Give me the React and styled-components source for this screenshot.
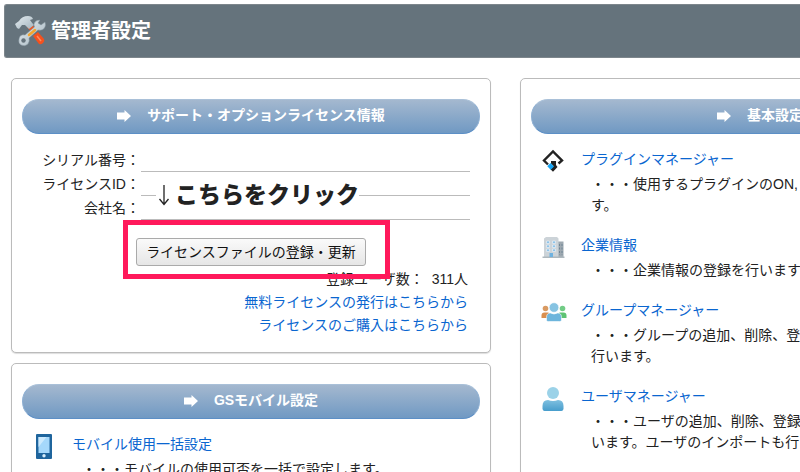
import React from 'react';
import styled, {createGlobalStyle} from 'styled-components';

const App = () => {
  return (
    <StyledPage>
      <GlobalStyle />
      <StyledHeader>
        <ToolsIcon />
        <h1>管理者設定</h1>
      </StyledHeader>
      <StyledColumns>
        <StyledColumn>
          <StyledCard>
            <SectionTitle>サポート・オプションライセンス情報</SectionTitle>
            <StyledLicense>
              <tbody>
                <tr>
                  <th scope='row'>シリアル番号：</th>
                  <td></td>
                </tr>
                <tr>
                  <th scope='row'>ライセンスID：</th>
                  <td>
                    <StyledCallout>
                      <ArrowDown />
                      こちらをクリック
                    </StyledCallout>
                  </td>
                </tr>
                <tr>
                  <th scope='row'>会社名：</th>
                  <td></td>
                </tr>
              </tbody>
            </StyledLicense>
            <StyledAction>
              <StyledHighlight>
                <StyledButton type='button'>
                  ライセンスファイルの登録・更新
                </StyledButton>
              </StyledHighlight>
            </StyledAction>
            <StyledSummary>
              <StyledCount>
                <dt>登録ユーザ数：</dt>
                <dd>311人</dd>
              </StyledCount>
              <StyledLink href='#free'>無料ライセンスの発行はこちらから</StyledLink>
              <StyledLink href='#buy'>ライセンスのご購入はこちらから</StyledLink>
            </StyledSummary>
          </StyledCard>
          <StyledCard>
            <SectionTitle>GSモバイル設定</SectionTitle>
            <MenuList items={mobileItems} />
          </StyledCard>
        </StyledColumn>
        <StyledCard>
          <SectionTitle>基本設定</SectionTitle>
          <MenuList items={basicItems} />
        </StyledCard>
      </StyledColumns>
    </StyledPage>
  );
};

const SectionTitle = ({children}) => (
  <StyledSectionTitle>
    <svg width='14' height='12' viewBox='0 0 14 12'>
      <path d='M0 2.500h7.500V0L14 6l-6.500 6V9.500H0z' fill='#fff' />
    </svg>
    {children}
  </StyledSectionTitle>
);

const MenuList = ({items}) => (
  <StyledMenu>
    {items.map(({id, title, lines, Icon}) => (
      <StyledMenuItem key={id}>
        <Icon />
        <div>
          <StyledLink href={`#${id}`}>{title}</StyledLink>
          <StyledDescription>
            {lines.map((line) => (
              <span key={line}>{line}</span>
            ))}
          </StyledDescription>
        </div>
      </StyledMenuItem>
    ))}
  </StyledMenu>
);

//icons
const ToolsIcon = () => (
  <svg width='32' height='32' viewBox='0 0 32 32'>
    <defs>
      <linearGradient id='steel' x1='0' y1='0' x2='1' y2='1'>
        <stop offset='0' stopColor='#e6edf1' />
        <stop offset='1' stopColor='#a3b4be' />
      </linearGradient>
    </defs>
    <path d='M12 12l4-3 6 6-4 4z' fill='#e8582a' />
    <path d='M18 21l5-4 6 7q1 2-1 4t-4 1z' fill='#f4511e' />
    <path d='M22 21l4 5' stroke='#ff8a5c' strokeWidth='1.500' />
    <path
      d='M0 9l4-3q3-5 9-5 4 0 5 3l-3 1q2 3 4 5l-5 4-4-4-3 0-3 4-2-1-1-2z'
      fill='url(#steel)'
    />
    <path
      d='M25 5q-5 0-6 4 0 2 .5 3L10 20q-5-1-6 4-1 4 2 6 4 2 7-1 2-3 1-6l9-8q5 1 7-3 1-2 0-5l-4 3-3-2z'
      fill='url(#steel)'
      stroke='#82939d'
      strokeWidth='.5'
    />
    <path d='M14 20l6-5' stroke='#f5a52b' strokeWidth='2.500' strokeLinecap='round' />
    <circle cx='8.500' cy='25.500' r='2.200' fill='#65737c' />
  </svg>
);

const ArrowDown = () => (
  <svg width='12' height='22' viewBox='0 0 12 22'>
    <path d='M6 1v19M1.500 15L6 20.500 10.500 15' fill='none' stroke='#222' strokeWidth='1.300' />
  </svg>
);

const PluginIcon = () => (
  <svg width='24' height='24' viewBox='0 0 24 24'>
    <path
      d='M7 15.500L3 11.500l9-9 9 9-3.500 3'
      fill='none'
      stroke='#222'
      strokeWidth='2.400'
    />
    <path d='M10 12h5v4l1.500 2-4.500 4.800-2.500-2.600 3-3.200-2.500-2.500z' fill='#222' />
    <path d='M9.500 14l3.500 3.500-3.300 3.200L6.300 17.300z' fill='#16a5f5' />
  </svg>
);

const BuildingIcon = () => (
  <svg width='24' height='24' viewBox='0 0 24 24'>
    <path d='M16 6.500h6.500V22H16z' fill='#9da8b0' />
    <path d='M3 3.500L5 2h11l1.500 1.500V22H3z' fill='#ccd3d8' />
    <path d='M1.500 21.500h22v1.500h-22z' fill='#aeb8be' />
    <path
      d='M5.500 6h3v2.500h-3zM11.500 6h3v2.500h-3zM5.500 10h3v2.500h-3zM11.500 10h3v2.500h-3zM5.500 14h3v2.500h-3zM11.500 14h3v2.500h-3z'
      fill='#8dc3e8'
      stroke='#f3f7fa'
      strokeWidth='.6'
    />
    <path d='M8.500 18h3.500v4H8.500z' fill='#6eb2e0' />
    <path d='M18.500 9v11M21 9v11' stroke='#6f8595' strokeDasharray='2 1.500' />
  </svg>
);

const GroupIcon = () => (
  <svg width='26' height='24' viewBox='0 0 26 24'>
    <circle cx='4.500' cy='8.500' r='2.800' fill='#d99a62' />
    <path d='M.5 18v-2.500q0-3 3-3h3q3 0 3 3V18z' fill='#d98f4f' />
    <circle cx='21.500' cy='8.500' r='2.800' fill='#72cc86' />
    <path d='M16.500 18v-2.500q0-3 3-3h3q3 0 3 3V18z' fill='#5ec374' />
    <circle cx='13' cy='7.500' r='4.800' fill='#86c3e2' stroke='#fff' strokeWidth='.6' />
    <path
      d='M5.500 20.500v-3q0-4.500 4-4.500 3.500 2 7 0 4 0 4 4.500v3q-1 1-2 1h-11q-1.500 0-2-1z'
      fill='#6db5dc'
      stroke='#fff'
      strokeWidth='.6'
    />
  </svg>
);

const UserIcon = () => (
  <svg width='24' height='26' viewBox='0 0 24 26'>
    <defs>
      <linearGradient id='user' x1='0' y1='0' x2='0' y2='1'>
        <stop offset='0' stopColor='#7fc0e0' />
        <stop offset='1' stopColor='#479dcc' />
      </linearGradient>
    </defs>
    <circle cx='12' cy='7' r='6' fill='#9bd2e8' />
    <path d='M1.500 23v-3q0-6 5.500-6 5 2 10 0 5.500 0 5.500 6v3q-.5 2-2 2h-17q-1.500 0-2-2z' fill='url(#user)' />
  </svg>
);

const PhoneIcon = () => (
  <svg width='24' height='26' viewBox='0 0 24 26'>
    <rect x='4' y='0' width='16' height='25' rx='1' fill='#1f659d' />
    <rect x='6.500' y='3' width='11' height='16' fill='#a5d8fb' />
    <path d='M6.500 3h8l-8 10z' fill='#cdeafd' />
    <circle cx='12' cy='21.800' r='1.700' fill='#d8edfa' />
  </svg>
);

const mobileItems = [
  {
    id: 'mobile',
    title: 'モバイル使用一括設定',
    lines: ['・・・モバイルの使用可否を一括で設定します。'],
    Icon: PhoneIcon,
  },
];

const basicItems = [
  {
    id: 'plugin',
    title: 'プラグインマネージャー',
    lines: ['・・・使用するプラグインのON,', 'す。'],
    Icon: PluginIcon,
  },
  {
    id: 'company',
    title: '企業情報',
    lines: ['・・・企業情報の登録を行います'],
    Icon: BuildingIcon,
  },
  {
    id: 'group',
    title: 'グループマネージャー',
    lines: ['・・・グループの追加、削除、登', '行います。'],
    Icon: GroupIcon,
  },
  {
    id: 'user',
    title: 'ユーザマネージャー',
    lines: ['・・・ユーザの追加、削除、登録', 'います。ユーザのインポートも行'],
    Icon: UserIcon,
  },
];

const GlobalStyle = createGlobalStyle`
  * {
    box-sizing: border-box;
    margin: 0;
    padding: 0;
  }
  body {
    background: white;
    color: #222;
    font-family: 'Liberation Sans', 'Noto Sans CJK JP', sans-serif;
    font-size: 14px;
    line-height: 21px;
  }
`;

const StyledPage = styled.main`
  height: 100vh;
  padding: 4px 0 0 4px;
  overflow: hidden;
`;

const StyledHeader = styled.header`
  display: flex;
  align-items: center;
  gap: 4px;
  padding: 10px;
  background: #65737c;
  border: 1px solid #7d868c;
  border-right: none;
  border-radius: 3px 0 0 3px;
  color: white;
  h1 {
    font-size: 20px;
    line-height: 32px;
  }
`;

/* the second column runs past the right edge of the window */
const StyledColumns = styled.div`
  display: grid;
  grid-template-columns: 60vw 60vw;
  gap: 29px;
  padding: 20px 0 0 7px;
`;

const StyledColumn = styled.div`
  display: flex;
  flex-direction: column;
  gap: 10px;
`;

const StyledCard = styled.section`
  padding: 20px 10px 15px;
  background: white;
  border: 1px solid #bbb;
  border-radius: 5px;
  box-shadow: 0 1px 1px #ddd;
`;

const StyledSectionTitle = styled.h2`
  display: flex;
  justify-content: center;
  align-items: center;
  gap: 16px;
  height: 35px;
  padding-bottom: 2px;
  background: linear-gradient(#a4b8cf, #7099c3);
  border: 1px solid #8fb0d3;
  border-top-color: #a9c0d8;
  border-bottom-color: #5c8fc6;
  border-radius: 17px;
  color: white;
  font-size: 14px;
  white-space: nowrap;
`;

const StyledLicense = styled.table`
  width: 100%;
  margin-top: 14px;
  padding-right: 10px;
  border-collapse: separate;
  border-spacing: 0;
  th {
    width: 119px;
    padding-right: 1px;
    font-weight: normal;
    text-align: right;
    white-space: nowrap;
  }
  td {
    position: relative;
    height: 24px;
    border-bottom: 1px solid #bbb;
  }
`;

const StyledCallout = styled.div`
  position: absolute;
  top: 9px;
  left: 15px;
  display: flex;
  align-items: center;
  gap: 5px;
  padding-left: 2px;
  background: white;
  font-size: 23px;
  font-weight: 900;
  line-height: 28px;
  white-space: nowrap;
`;

const StyledAction = styled.div`
  display: flex;
  justify-content: center;
  margin-top: 18px;
`;

const StyledHighlight = styled.div`
  position: relative;
  &::after {
    content: '';
    position: absolute;
    inset: -18px -24px -13px -13px;
    border: 5px solid #ff195b;
    pointer-events: none;
  }
`;

const StyledButton = styled.button`
  display: block;
  padding: 1px 9px;
  background: linear-gradient(#fafafa, #e6e6e6);
  border: 1px solid #aaa;
  border-radius: 3px;
  color: #111;
  font: inherit;
  line-height: 24px;
  white-space: nowrap;
`;

const StyledSummary = styled.div`
  display: flex;
  flex-direction: column;
  align-items: flex-end;
  margin-top: 2px;
  padding-right: 12px;
  line-height: 23px;
`;

const StyledCount = styled.dl`
  display: flex;
  gap: 8px;
`;

const StyledLink = styled.a`
  color: #0a66d0;
  text-decoration: none;
`;

const StyledMenu = styled.ul`
  display: flex;
  flex-direction: column;
  gap: 19px;
  margin-top: 15px;
  list-style: none;
`;

const StyledMenuItem = styled.li`
  display: grid;
  grid-template-columns: 24px 1fr;
  gap: 16px;
  padding-left: 10px;
`;

const StyledDescription = styled.p`
  display: flex;
  flex-direction: column;
  padding: 4px 0 0 10px;
  white-space: nowrap;
`;

export default App;
